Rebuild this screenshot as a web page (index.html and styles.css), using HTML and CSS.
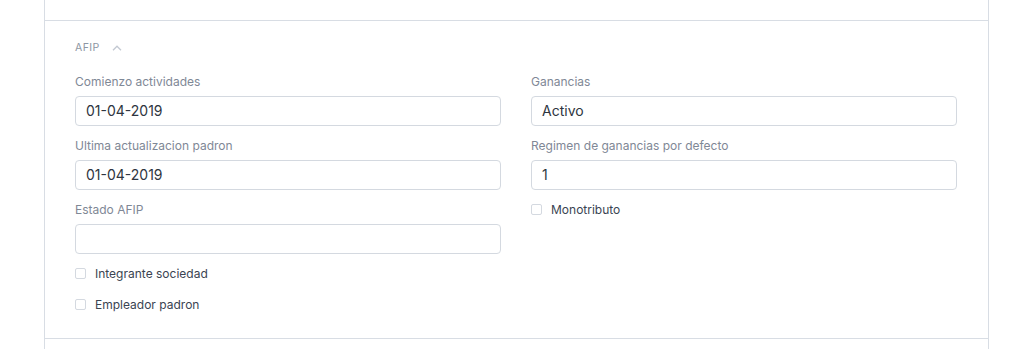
FILE: index.html
```html
<!DOCTYPE html>
<html lang="es">
<head>
<meta charset="utf-8">
<title>AFIP</title>
<link rel="stylesheet" href="styles.css">
</head>
<body>
<div class="panel">
  <div class="prev-section"></div>
  <section class="section">
    <div class="section-head">
      <span class="section-title">AFIP</span>
      <svg class="chev" width="10" height="6" viewBox="0 0 10 6"><path d="M1 5.2 L5 1.2 L9 5.2" fill="none" stroke="#c3c9d2" stroke-width="1.3"/></svg>
    </div>
    <div class="grid">
      <div class="col">
        <div class="field">
          <label class="label">Comienzo actividades</label>
          <div class="input">01-04-2019</div>
        </div>
        <div class="field">
          <label class="label">Ultima actualizacion padron</label>
          <div class="input">01-04-2019</div>
        </div>
        <div class="field">
          <label class="label">Estado AFIP</label>
          <div class="input"></div>
        </div>
        <div class="check-list">
          <div class="check"><span class="box"></span><span class="check-label">Integrante sociedad</span></div>
          <div class="check"><span class="box"></span><span class="check-label">Empleador padron</span></div>
        </div>
      </div>
      <div class="col">
        <div class="field">
          <label class="label">Ganancias</label>
          <div class="input">Activo</div>
        </div>
        <div class="field">
          <label class="label">Regimen de ganancias por defecto</label>
          <div class="input">1</div>
        </div>
        <div class="check-list right">
          <div class="check"><span class="box"></span><span class="check-label">Monotributo</span></div>
        </div>
      </div>
    </div>
  </section>
  <div class="next-section"></div>
</div>
</body>
</html>
```
FILE: styles.css
```css
html, body {
  margin: 0;
  padding: 0;
  background: #ffffff;
  font-family: Inter, "Liberation Sans", sans-serif;
  color: #36414f;
}
.panel {
  margin-left: 44px;
  width: 943px;
  height: 349px;
  border-left: 1px solid #d8dde4;
  border-right: 1px solid #d8dde4;
  display: flex;
  flex-direction: column;
}
.prev-section {
  height: 20px;
  flex: none;
  border-bottom: 1px solid #d8dde4;
}
.section {
  padding: 19px 30px 0 30px;
  height: 318px;
  flex: none;
  box-sizing: border-box;
  border-bottom: 1px solid #d8dde4;
}
.section-head {
  display: flex;
  align-items: center;
  gap: 12px;
  height: 16px;
  margin-bottom: 19px;
}
.section-title {
  font-size: 10.5px;
  letter-spacing: 0.4px;
  color: #8d96a3;
  line-height: 16px;
}
.chev { display: block; margin-top: -1px; }
.grid {
  display: grid;
  grid-template-columns: 426px 426px;
  column-gap: 30px;
}
.col { display: flex; flex-direction: column; }
.field { margin-bottom: 13px; }
.label {
  display: block;
  font-size: 12px;
  line-height: 14px;
  color: #7f8896;
  margin-bottom: 7px;
}
.input {
  height: 30px;
  box-sizing: border-box;
  border: 1px solid #d4d9e0;
  border-radius: 4px;
  padding: 0 10px;
  font-size: 14px;
  line-height: 28px;
  color: #2e3540;
}
.check-list {
  display: flex;
  flex-direction: column;
  gap: 15px;
  margin-top: -2px;
}
.check-list.right { margin-top: -2px; }
.check {
  display: flex;
  align-items: center;
  height: 16px;
}
.box {
  flex: none;
  width: 9px;
  height: 9px;
  border: 1px solid #d4d9e0;
  border-radius: 2px;
  margin-right: 9px;
}
.check-label {
  font-size: 12px;
  color: #3a4452;
}
```
